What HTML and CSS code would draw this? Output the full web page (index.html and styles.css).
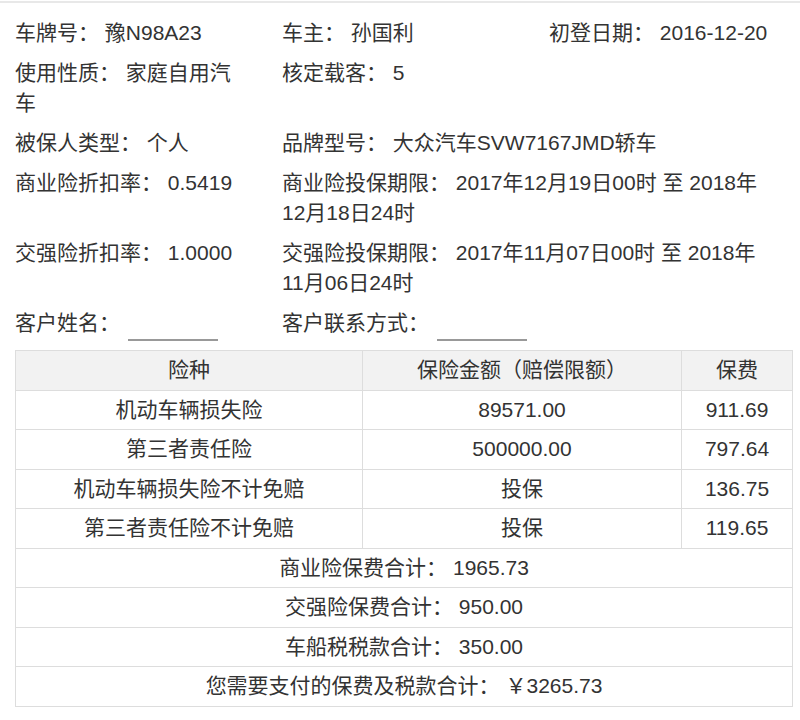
FILE: index.html
```html
<!DOCTYPE html>
<html lang="zh-CN">
<head>
<meta charset="utf-8">
<title>保单信息</title>
<link rel="stylesheet" href="styles.css">
</head>
<body>
<div class="page">
  <div class="info">
    <div class="row">
      <div class="cell">车牌号： 豫N98A23</div>
      <div class="cell">车主： 孙国利</div>
      <div class="cell">初登日期： 2016-12-20</div>
    </div>
    <div class="row">
      <div class="cell">使用性质： 家庭自用汽车</div>
      <div class="cell">核定载客： 5</div>
    </div>
    <div class="row">
      <div class="cell">被保人类型： 个人</div>
      <div class="cell wide">品牌型号： 大众汽车SVW7167JMD轿车</div>
    </div>
    <div class="row">
      <div class="cell">商业险折扣率： 0.5419</div>
      <div class="cell wide">商业险投保期限： 2017年12月19日00时 至 2018年12月18日24时</div>
    </div>
    <div class="row">
      <div class="cell">交强险折扣率： 1.0000</div>
      <div class="cell wide">交强险投保期限： 2017年11月07日00时 至 2018年11月06日24时</div>
    </div>
    <div class="row">
      <div class="cell">客户姓名： <span class="blank"></span></div>
      <div class="cell wide">客户联系方式： <span class="blank"></span></div>
    </div>
  </div>
  <table class="quote">
    <colgroup>
      <col class="c1">
      <col class="c2">
      <col class="c3">
    </colgroup>
    <thead>
      <tr><th>险种</th><th>保险金额（赔偿限额）</th><th>保费</th></tr>
    </thead>
    <tbody>
      <tr><td>机动车辆损失险</td><td>89571.00</td><td>911.69</td></tr>
      <tr><td>第三者责任险</td><td>500000.00</td><td>797.64</td></tr>
      <tr><td>机动车辆损失险不计免赔</td><td>投保</td><td>136.75</td></tr>
      <tr><td>第三者责任险不计免赔</td><td>投保</td><td>119.65</td></tr>
      <tr><td colspan="3">商业险保费合计： 1965.73</td></tr>
      <tr><td colspan="3">交强险保费合计： 950.00</td></tr>
      <tr><td colspan="3">车船税税款合计： 350.00</td></tr>
      <tr><td colspan="3">您需要支付的保费及税款合计： ￥3265.73</td></tr>
    </tbody>
  </table>
</div>
</body>
</html>
```

FILE: styles.css
```css
html, body {
  margin: 0;
  padding: 0;
  background: #fff;
}

body {
  padding-top: 1px;
  font-family: "Liberation Sans", "Noto Sans CJK SC", sans-serif;
  font-size: 21px;
  color: #333;
}

.page {
  border-top: 2px solid #e8e8e8;
  width: 800px;
}

.info {
  display: flex;
  flex-direction: column;
  gap: 10px;
  padding-top: 15px;
}

.row {
  display: grid;
  grid-template-columns: 267px 267px 266px;
  line-height: 30px;
}

.cell {
  padding: 0 20px 0 15px;
}

.cell.wide {
  grid-column: span 2;
  padding-right: 30px;
}

.blank {
  display: inline-block;
  width: 90px;
  height: 31px;
  margin-left: 2px;
  border-bottom: 2px solid #999;
  vertical-align: top;
}

.quote {
  margin: 9px 0 0 15px;
  width: 777px;
  border-collapse: collapse;
  table-layout: fixed;
}

.c1 { width: 347px; }
.c2 { width: 319px; }
.c3 { width: 111px; }

.quote th,
.quote td {
  border: 1px solid #ddd;
  height: 38.5px;
  padding: 0;
  text-align: center;
  font-weight: normal;
  line-height: 24px;
}

.quote th {
  background: #f2f2f2;
}
```
